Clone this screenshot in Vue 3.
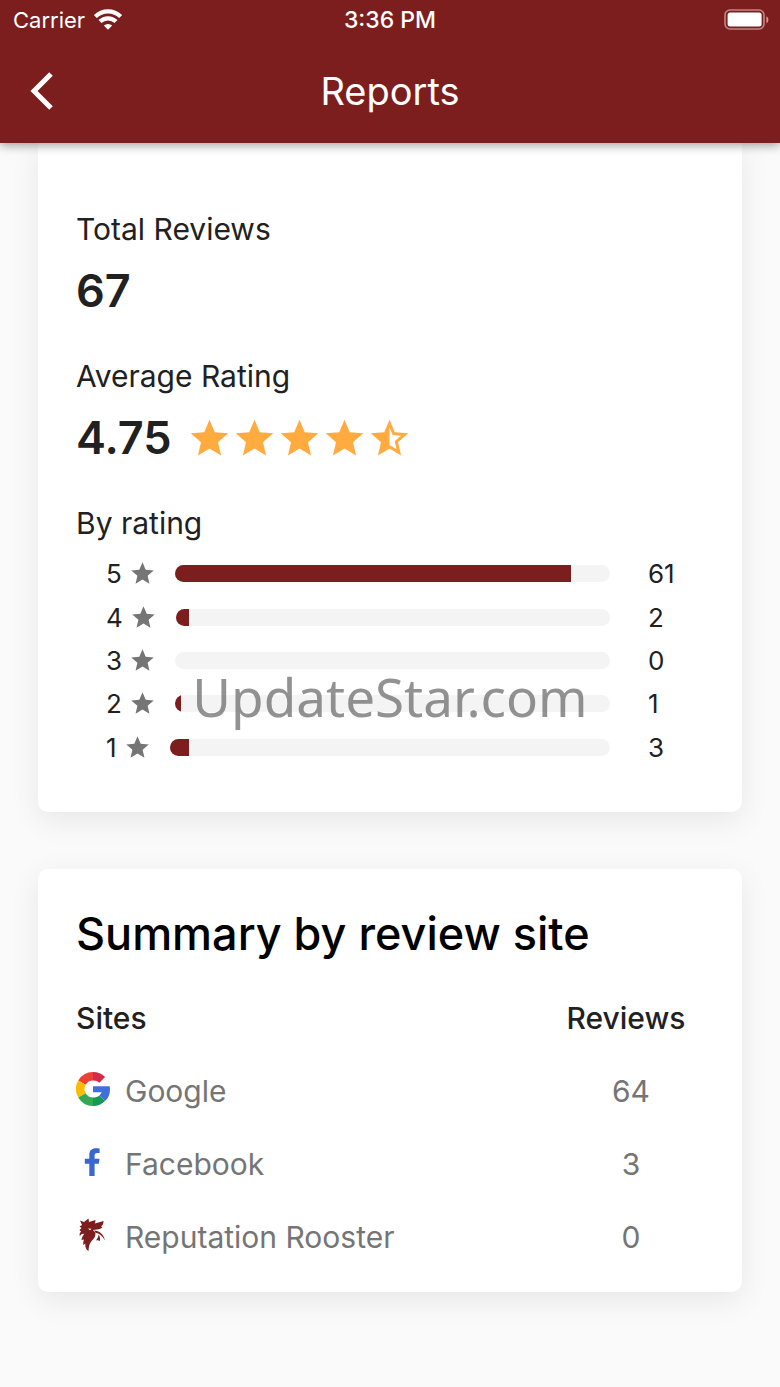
<script setup>
const total = 67
const ratings = [
  { stars: 5, count: 61 },
  { stars: 4, count: 2 },
  { stars: 3, count: 0 },
  { stars: 2, count: 1 },
  { stars: 1, count: 3 },
]
const starPath = 'M12 17.27 18.18 21l-1.64-7.03L22 9.24l-7.19-.61L12 2 9.19 8.63 2 9.24l5.46 4.73L5.82 21z'
</script>

<template>
  <div class="page">
    <header class="top">
      <div class="status">
        <div class="carrier">
          <span>Carrier</span>
          <svg class="wifi" viewBox="0 0 28 21" aria-hidden="true">
            <path d="M1.4 7.6a18 18 0 0 1 25.2 0" />
            <path d="M6 12.6a11.4 11.4 0 0 1 16 0" />
            <path class="dot" d="M14 20.8 9.8 16.6a6 6 0 0 1 8.4 0z" />
          </svg>
        </div>
        <span class="clock">3:36 PM</span>
        <svg class="battery" viewBox="0 0 46 22" aria-hidden="true">
          <rect class="shell" x="1" y="1" width="39" height="19" rx="5" />
          <rect class="level" x="3.6" y="3.6" width="34" height="14" rx="2.5" />
          <path class="tip" d="M42.4 7.2a4 4 0 0 1 0 7z" />
        </svg>
      </div>
      <div class="bar">
        <button class="back" type="button" aria-label="Back">
          <svg viewBox="0 0 24 38" aria-hidden="true"><path d="M21 2 4 19l17 17" /></svg>
        </button>
        <h1>Reports</h1>
      </div>
    </header>

    <main>
      <section class="card totals">
        <h2 class="label">Total Reviews</h2>
        <p class="figure">{{ total }}</p>
        <h2 class="label">Average Rating</h2>
        <div class="average">
          <p class="figure">4.75</p>
          <div class="stars" role="img" aria-label="4.75 out of 5 stars">
            <svg v-for="n in 4" :key="n" viewBox="0 0 24 24"><path :d="starPath" /></svg>
            <svg viewBox="0 0 24 24">
              <path d="m22 9.24-7.19-.62L12 2 9.19 8.63 2 9.24l5.46 4.73L5.82 21 12 17.27 18.18 21l-1.63-7.03zM12 15.4V6.1l1.71 4.04 4.38.38-3.32 2.88 1 4.28z" />
            </svg>
          </div>
        </div>
        <h2 class="label">By rating</h2>
        <ul class="ratings">
          <li v-for="r in ratings" :key="r.stars">
            <span>{{ r.stars }}</span>
            <svg class="mini" viewBox="0 0 24 24" aria-hidden="true"><path :d="starPath" /></svg>
            <div class="track">
              <div class="fill" :style="{ width: (r.count / total) * 100 + '%' }"></div>
            </div>
            <span class="count">{{ r.count }}</span>
          </li>
        </ul>
        <div class="watermark">UpdateStar.com</div>
      </section>

      <section class="card sites">
        <h2 class="title">Summary by review site</h2>
        <table>
          <thead>
            <tr><th scope="col">Sites</th><th scope="col" class="num">Reviews</th></tr>
          </thead>
          <tbody>
            <tr>
              <td>
                <div class="site">
                  <svg viewBox="0 0 48 48" aria-hidden="true">
                    <path fill="#EA4335" d="M24 0v12a12 12 0 0 0-10.400 6L3.200 12A24 24 0 0 1 24 0z" />
                    <path fill="#D42B4B" d="M24 0a24 24 0 0 1 17 7l-8 8.200A12 12 0 0 0 24 12z" />
                    <path fill="#FBBC05" d="M3.200 12l10.400 6a12 12 0 0 0 0 12L3.200 36a24 24 0 0 1 0-24z" />
                    <path fill="#34A853" d="M3.200 36l10.400-6A12 12 0 0 0 24 36v12A24 24 0 0 1 3.200 36z" />
                    <path fill="#149A52" d="M24 36c3.500 0 6.500-1 9-3l8 8a24 24 0 0 1-17 7z" />
                    <path fill="#3F6FDB" d="M24 20h23.500c1.500 8-.5 15.500-6.500 21l-8-8c1.500-1.200 2.600-2.600 3.200-4.500H24z" />
                  </svg>
                  <span>Google</span>
                </div>
              </td>
              <td class="num">64</td>
            </tr>
            <tr>
              <td>
                <div class="site">
                  <svg viewBox="0 0 34 34" aria-hidden="true">
                    <path fill="#3A66D0" d="M13.300 31V18.800H8.800v-5h4.500V10c0-4.600 2.600-6.700 6.500-6.700 1.700 0 3.200.1 3.800.2v4.400h-2.500c-2 0-2.500 1-2.500 2.500v3.400h4.900l-.7 5h-4.200V31z" />
                  </svg>
                  <span>Facebook</span>
                </div>
              </td>
              <td class="num">3</td>
            </tr>
            <tr>
              <td>
                <div class="site">
                  <svg viewBox="0 0 34 34" aria-hidden="true">
                    <path fill="#7c1e1e" d="M4 2.500l4 1.500L12.500.5 13 4l6.500-2-.5 3.500L27.500 3c0 2.500-.5 4-2.500 5.500l1.500.5c-1 1.500-3 2.300-5.500 2.500l-4 .5 2.500 3c0 3-1 5-3 7-2.500 2.500-3.500 5-4 11-2.500-1.500-3.500-4-3.200-7.500L7.500 27c-.5-2-.2-3.500.5-5.500L5.500 22c.2-2.500 1.500-4 2.500-6-2-.5-3.500.5-4 2.500C3.200 16.500 3.500 15 5 13.500L3.500 12l2-2L3.500 8.500 6 7z" />
                    <path fill="#7c1e1e" d="M18 12.500c5.500.3 9.500 3.500 11 10-2.500-4.500-5.500-7-9.500-7.700z" />
                    <path fill="#7c1e1e" d="M22.500 16.500c1.300 1.500 1.800 3.500 1.500 6.500-1-.8-2-1-4-.7 1.500-1.700 2.400-3.300 2.500-5.800z" />
                    <path fill="#fff" d="M12 10.500l3.500.3-1.500 1.400z" />
                  </svg>
                  <span>Reputation Rooster</span>
                </div>
              </td>
              <td class="num">0</td>
            </tr>
          </tbody>
        </table>
      </section>
    </main>
  </div>
</template>

<style>
body { background: #fafafa; }
</style>

<style scoped>
.page { font-family: Inter, Roboto, sans-serif; color: #212121; }
h1, h2, p, ul { margin: 0; padding: 0; font-weight: 400; }
svg { display: block; flex: none; }
.top {
  position: relative;
  z-index: 1;
  background: #7c1e1e;
  color: #fff;
  box-shadow: 0 2px 10px rgba(0, 0, 0, .4);
}
.status {
  display: grid;
  grid-template-columns: 1fr auto 1fr;
  align-items: center;
  height: 40px;
  padding: 0 10px;
  font-size: 22px;
}
.carrier { display: flex; align-items: center; gap: 9px; padding-left: 3px; }
.wifi { width: 28px; height: 21px; margin-bottom: 2px; fill: none; stroke: #fff; stroke-width: 4.2; }
.wifi .dot { fill: #fff; stroke: none; }
.clock { font-size: 23px; font-weight: 500; }
.battery { justify-self: end; width: 46px; height: 22px; }
.shell { fill: none; stroke: #bd8787; stroke-width: 1.6; }
.level { fill: #fff; }
.tip { fill: #d89a8e; }
.bar {
  display: grid;
  grid-template-columns: 60px 1fr 60px;
  align-items: center;
  height: 101px;
  padding: 0 12px 2px;
}
.back { display: grid; place-items: center; height: 60px; padding: 0; border: 0; background: none; cursor: pointer; }
.back svg { width: 24px; height: 38px; fill: none; stroke: #fff; stroke-width: 5; }
h1 { font-size: 38px; line-height: 48px; text-align: center; }
main { padding: 0 38px 38px; }
.card {
  position: relative;
  padding: 0 38px;
  border-radius: 10px;
  background: #fff;
  box-shadow: 0 8px 30px rgba(0, 0, 0, .08);
}
.totals { padding-top: 66px; padding-bottom: 43px; border-radius: 0 0 10px 10px; }
.label { font-size: 30px; line-height: 40px; }
.figure { margin: 13px 0 36px; font-size: 45px; line-height: 58px; font-weight: 600; }
.average { display: flex; gap: 15px; }
.stars { display: flex; height: 45px; margin-top: 20px; }
.stars svg { width: 45px; height: 45px; fill: #ffab40; }
.ratings {
  display: grid;
  grid-auto-rows: 1fr;
  min-height: 217px;
  margin-top: 9px;
  padding-left: 30px;
  list-style: none;
  font-size: 26px;
  line-height: 43px;
}
.ratings li { display: flex; align-items: center; }
.mini { width: 27px; height: 27px; margin: 0 19px 0 7px; fill: #757575; }
.track { flex: 1; height: 17px; border-radius: 9px; background: #f4f4f4; overflow: hidden; }
.fill { height: 100%; background: #7c1e1e; }
.count { width: 56px; margin-left: 38px; }
.watermark {
  position: absolute;
  left: 0;
  right: 0;
  bottom: 79px;
  font-family: "Noto Sans", "Open Sans", sans-serif;
  font-size: 53px;
  line-height: 72px;
  text-align: center;
  color: rgba(110, 110, 110, .75);
}
.sites { margin-top: 57px; padding-top: 36px; padding-bottom: 19px; }
.title { font-size: 45px; line-height: 58px; font-weight: 500; color: #000; }
table { width: 100%; margin-top: 18px; border-collapse: collapse; font-size: 30px; color: #757575; }
th, td { box-sizing: border-box; height: 73px; padding: 0; text-align: left; }
th { font-weight: 500; color: #212121; }
.num { width: 156px; text-align: center; }
td.num { padding-left: 10px; }
.site { display: flex; align-items: center; gap: 15px; }
.site svg { width: 34px; height: 34px; margin-bottom: 4px; }
</style>
